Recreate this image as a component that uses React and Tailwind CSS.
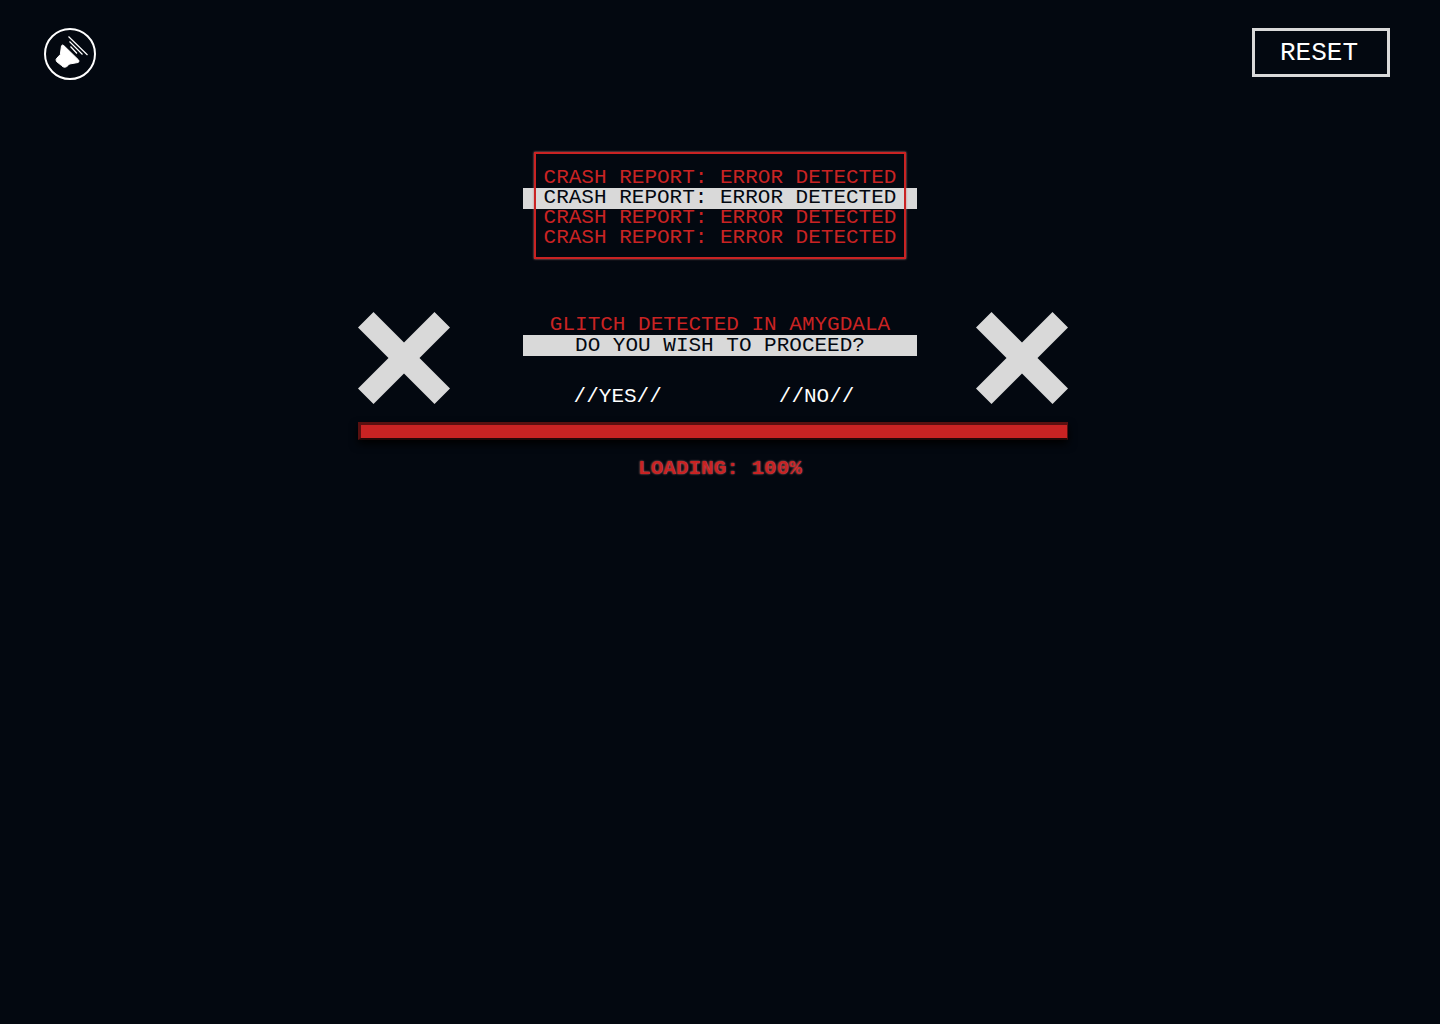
import React from "react";

function Cross() {
  return (
    <svg viewBox="0 0 92 92" className="size-[92px] fill-[#d9d9d9]" aria-hidden="true">
      <path d="M15.5 0 46 30.5 76.500 0 92 15.500 61.500 46 92 76.500 76.500 92 46 61.500 15.500 92 0 76.500 30.500 46 0 15.500Z" />
    </svg>
  );
}

function SoundIcon() {
  return (
    <svg viewBox="0 0 52 52" className="size-[52px]" fill="none" aria-hidden="true">
      <circle cx="26" cy="26" r="25" stroke="#fff" strokeWidth="2" />
      <path
        d="M17.500 17.800Q18.300 16.300 19.800 17.600L34.600 32Q35.800 33.800 34 34.500L25.500 36 24 37.500Q20.500 41 17.500 37.500L12.500 33.500Q11.300 31.500 13 30L16.300 26.500Z"
        fill="#fff"
        stroke="#fff"
        strokeLinejoin="round"
      />
      <path d="M24.500 8.500 43.500 27M25.500 13.500 38.500 26.500M26.500 18.500 33 25.500" stroke="#fff" strokeWidth="1.200" />
    </svg>
  );
}

const lines = [false, true, false, false];

export default function App() {
  return (
    <div className="min-h-screen bg-[#030810] font-['Liberation_Mono',monospace] text-[21px] leading-5 text-[#c92323]">
      <header className="flex items-start justify-between pt-7 pr-[50px] pl-11">
        <button type="button" aria-label="Toggle sound" className="rounded-full">
          <SoundIcon />
        </button>
        <button
          type="button"
          className="h-[49px] w-[138px] border-3 border-[#d9d9d9] pr-1 text-[26px] leading-8 text-white"
        >
          RESET
        </button>
      </header>

      <main className="isolate mt-[72px] flex flex-col items-center">
        <section className="border-2 border-[#c92323] px-2 pt-[14px] pb-[9px] whitespace-nowrap shadow-[0_0_2px_#c98080]">
          {lines.map((active, i) => (
            <p key={i} className={active ? "relative text-[#030810]" : ""}>
              {active && (
                <span className="absolute -inset-x-[21px] top-0 -z-10 h-[21px] bg-[#d9d9d9]" />
              )}
              CRASH REPORT: ERROR DETECTED
            </p>
          ))}
        </section>

        <div className="mt-[53px] w-full max-w-[724px]">
          <div className="grid grid-cols-[106px_1fr_106px]">
            <Cross />
            <section className="flex flex-col items-center pt-[3px] whitespace-nowrap">
              <p>GLITCH DETECTED IN AMYGDALA</p>
              <p className="w-[394px] bg-[#d9d9d9] text-center leading-[21px] text-[#030810]">
                DO YOU WISH TO PROCEED?
              </p>
              <div className="mt-[31px] flex gap-[117px] pr-3 text-white">
                <button type="button">//YES//</button>
                <button type="button">//NO//</button>
              </div>
            </section>
            <Cross />
          </div>

          <div className="mt-[15px] pr-3.5">
            <div
              role="progressbar"
              aria-label="Loading"
              aria-valuenow={100}
              aria-valuemin={0}
              aria-valuemax={100}
              className="h-[18px] border-t-3 border-r border-b-2 border-l-3 border-t-[#5a1010] border-r-[#5a1010] border-b-[#240808] border-l-[#5a1010] bg-[#c92323] shadow-[0_4px_8px_#000]"
            />
          </div>
          <p className="mt-[19px] text-center font-bold [text-shadow:0_0_2px_#c98080]">LOADING: 100%</p>
        </div>
      </main>
    </div>
  );
}
